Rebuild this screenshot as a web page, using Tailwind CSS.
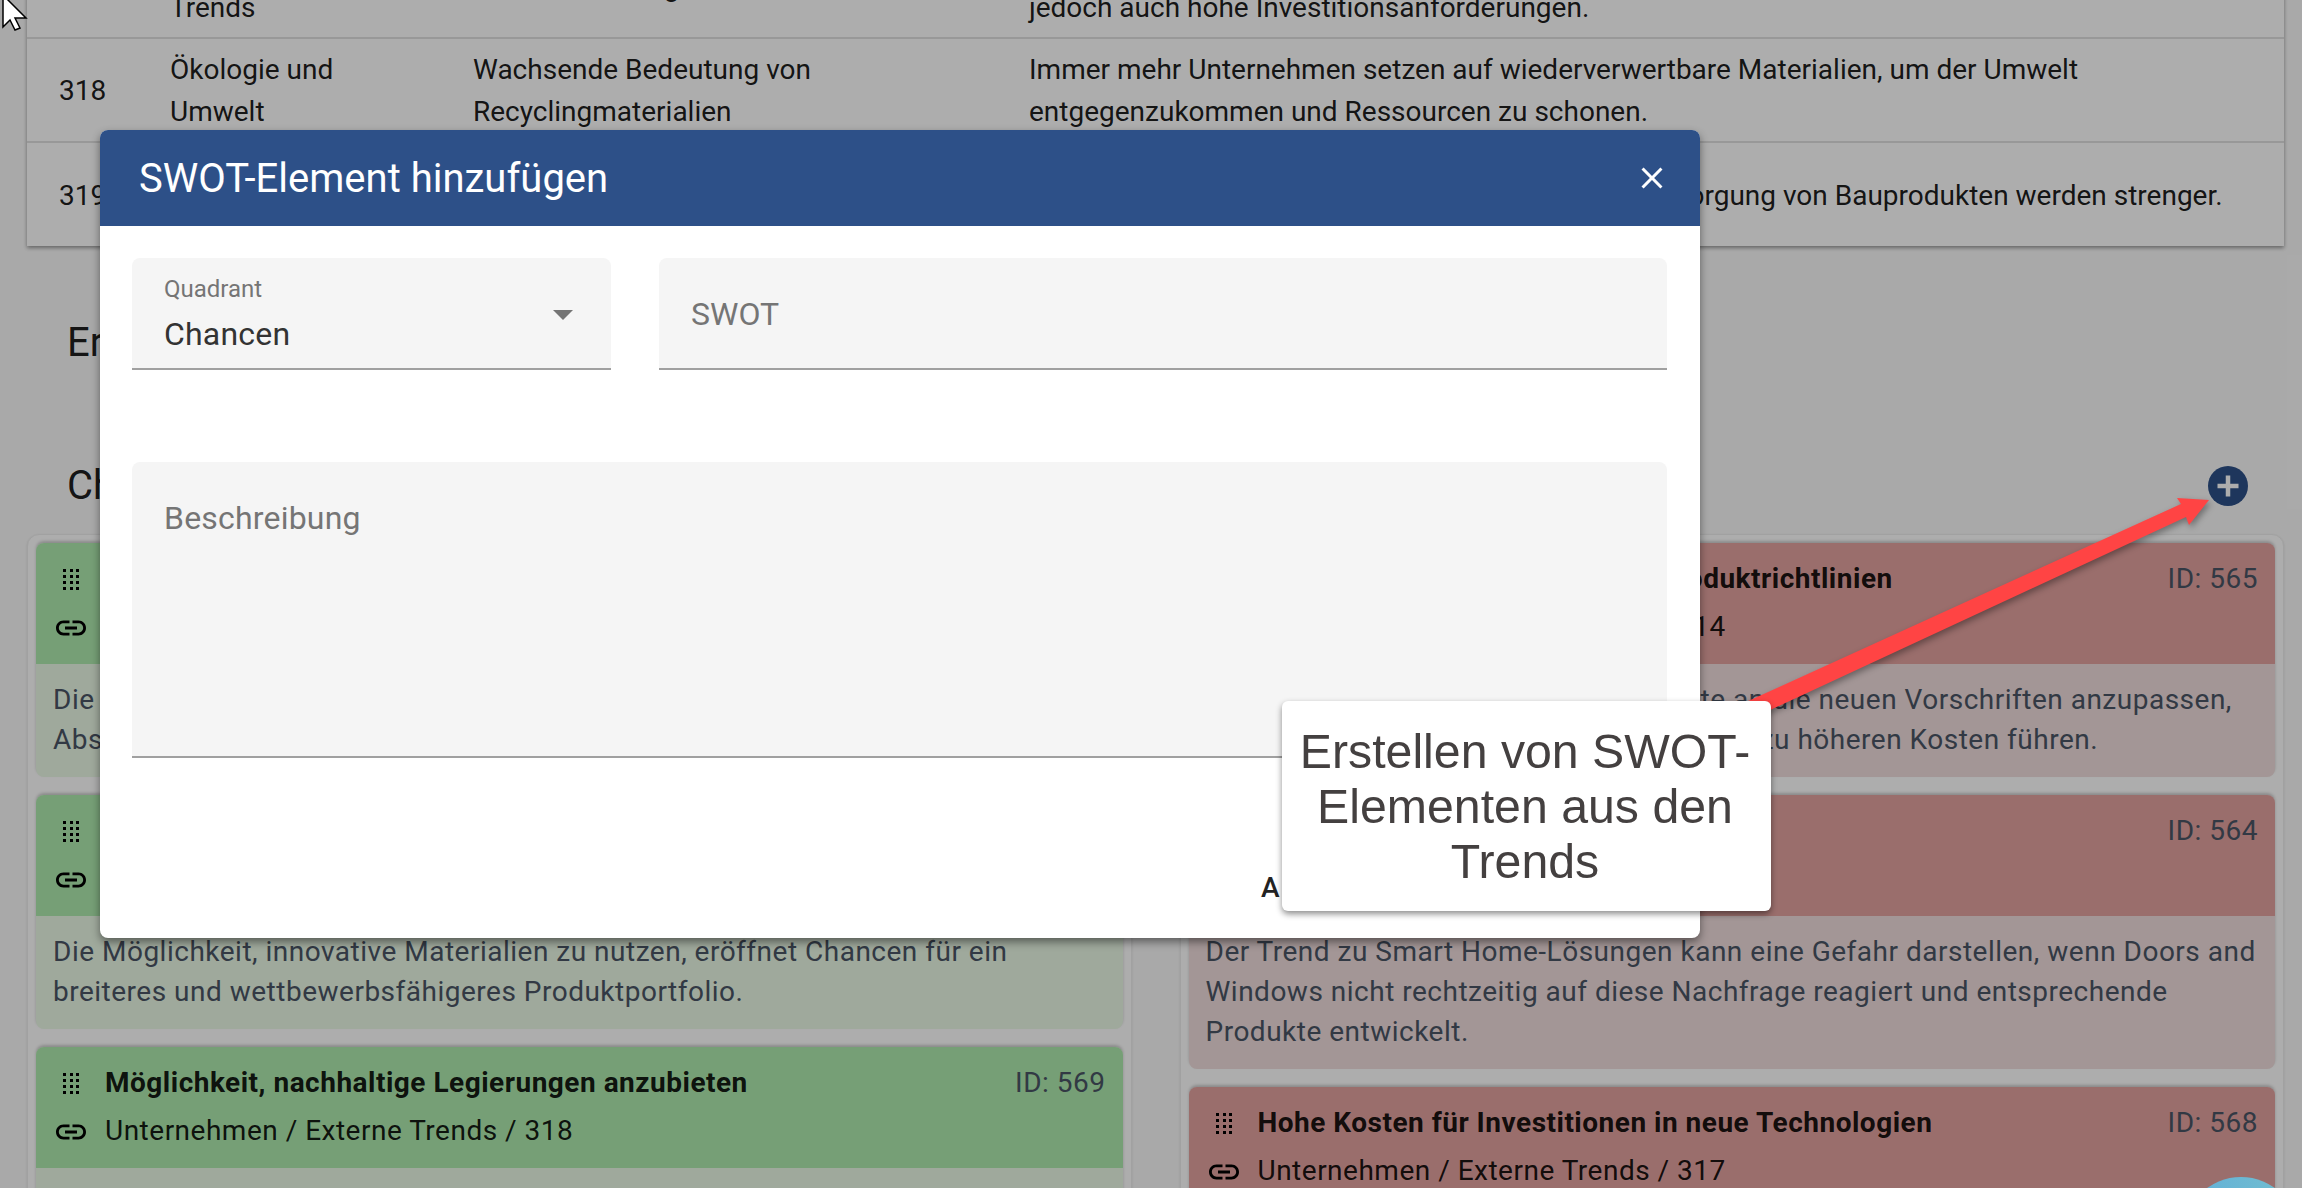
<!DOCTYPE html>
<html lang="de">

<head>
    <meta charset="UTF-8">
    <title>SWOT</title>
    <script src="https://cdn.jsdelivr.net/npm/@tailwindcss/browser@4"></script>
</head>

<body class="font-['Roboto',sans-serif] bg-[#fafafa] text-[28px] leading-[40px] text-black/90">
    <div class="relative h-[1188px] overflow-hidden">
        <!-- Page behind the dialog -->
        <div class="-mt-[66px] px-[27px] pr-[18px]">
            <table class="w-full table-fixed bg-white shadow-[0_2px_4px_rgba(0,0,0,.4)] leading-[42px] [&_td]:pt-[2px]">
                <tbody>
                    <tr class="h-[104px] border-b-2 border-[#e0e0e0]">
                        <td class="w-[111px] pl-8">317</td>
                        <td class="w-[303px] pl-8">Technologische<br>Trends</td>
                        <td class="w-[556px] pl-8">Automatisierung</td>
                        <td class="pl-8">Neue Maschinen erhöhen die Effizienz der Produktion, bringen<br>jedoch auch hohe Investitionsanforderungen.</td>
                    </tr>
                    <tr class="h-[104px] border-b-2 border-[#e0e0e0]">
                        <td class="pl-8">318</td>
                        <td class="pl-8">Ökologie und<br>Umwelt</td>
                        <td class="pl-8">Wachsende Bedeutung von<br>Recyclingmaterialien</td>
                        <td class="pl-8">Immer mehr Unternehmen setzen auf wiederverwertbare Materialien, um der Umwelt<br>entgegenzukommen und Ressourcen zu schonen.</td>
                    </tr>
                    <tr class="h-[104px]">
                        <td class="pl-8">319</td>
                        <td class="pl-8">Regulierung</td>
                        <td class="pl-8">Entsorgungsvorschriften</td>
                        <td class="pl-9 whitespace-nowrap">Alle gesetzlichen Vorschriften zur Lagerung und Entsorgung von Bauprodukten werden strenger.</td>
                    </tr>
                </tbody>
            </table>

            <h2 class="mt-[74px] pl-10 text-[40px] leading-[46px]">Erstellte SWOT-Elemente</h2>

            <div class="mt-[97px] flex h-[46px] items-center justify-between pl-10">
                <h2 class="text-[40px] leading-[46px]">Chancen</h2>
                <button class="mr-[36px] flex h-10 w-10 items-center justify-center rounded-full bg-[#2d5088]">
                    <svg class="h-10 w-10" viewBox="0 0 40 40" stroke="#fff" stroke-width="4.5"><path d="M20 9.5v21M9.5 20h21"/></svg>
                </button>
            </div>

            <div class="mt-[25px] grid grid-cols-2 gap-[48px] tracking-[.5px]">
                <!-- Chancen -->
                <div class="flex flex-col gap-[18px] rounded-xl border border-[#eeeeee] bg-white p-2 shadow-sm">
                    <div class="overflow-hidden rounded-lg bg-[#eaf9e6] shadow-[0_-2px_3px_rgba(0,0,0,.2)]">
                        <div class="bg-[#aeebae] pb-[17px] pl-5 pr-[17px] pt-4">
                            <div class="flex items-center">
                                <svg class="h-[21px] w-[30px] shrink-0" viewBox="0 0 30 21" fill="#000"><path d="M7 0h3v3H7zM14 0h3v3h-3zM20 0h3v3h-3zM7 6h3v3H7zM14 6h3v3h-3zM20 6h3v3h-3zM7 12h3v3H7zM14 12h3v3h-3zM20 12h3v3h-3zM7 18h3v3H7zM14 18h3v3h-3zM20 18h3v3h-3z"/></svg>
                                <span class="ml-[19px] font-bold">Innovative Technologien nutzen</span>
                                <span class="ml-auto text-gray-600">ID: 571</span>
                            </div>
                            <div class="mt-2 flex items-center">
                                <svg class="-ml-[3px] mt-[2px] h-9 w-[36px] shrink-0" viewBox="0 0 24 24" fill="#000"><path d="M3.9 12c0-1.71 1.39-3.1 3.1-3.1h4V7H7c-2.76 0-5 2.24-5 5s2.24 5 5 5h4v-1.9H7c-1.71 0-3.1-1.39-3.1-3.1zM8 13h8v-2H8v2zm9-6h-4v1.9h4c1.71 0 3.1 1.39 3.1 3.1s-1.39 3.1-3.1 3.1h-4V17h4c2.76 0 5-2.24 5-5s-2.24-5-5-5z"/></svg>
                                <span class="ml-4">Unternehmen / Externe Trends / 315</span>
                            </div>
                        </div>
                        <p class="px-[17px] pb-[17px] pt-4 text-gray-600">Die neuen Technologien erschließen zusätzliche Märkte und verbessern den<br>Absatz der bestehenden Produkte.</p>
                    </div>
                    <div class="overflow-hidden rounded-lg bg-[#eaf9e6] shadow-[0_-2px_3px_rgba(0,0,0,.2)]">
                        <div class="bg-[#aeebae] pb-[17px] pl-5 pr-[17px] pt-4">
                            <div class="flex items-center">
                                <svg class="h-[21px] w-[30px] shrink-0" viewBox="0 0 30 21" fill="#000"><path d="M7 0h3v3H7zM14 0h3v3h-3zM20 0h3v3h-3zM7 6h3v3H7zM14 6h3v3h-3zM20 6h3v3h-3zM7 12h3v3H7zM14 12h3v3h-3zM20 12h3v3h-3zM7 18h3v3H7zM14 18h3v3h-3zM20 18h3v3h-3z"/></svg>
                                <span class="ml-[19px] font-bold">Nutzung innovativer Materialien</span>
                                <span class="ml-auto text-gray-600">ID: 570</span>
                            </div>
                            <div class="mt-2 flex items-center">
                                <svg class="-ml-[3px] mt-[2px] h-9 w-[36px] shrink-0" viewBox="0 0 24 24" fill="#000"><path d="M3.9 12c0-1.71 1.39-3.1 3.1-3.1h4V7H7c-2.76 0-5 2.24-5 5s2.24 5 5 5h4v-1.9H7c-1.71 0-3.1-1.39-3.1-3.1zM8 13h8v-2H8v2zm9-6h-4v1.9h4c1.71 0 3.1 1.39 3.1 3.1s-1.39 3.1-3.1 3.1h-4V17h4c2.76 0 5-2.24 5-5s-2.24-5-5-5z"/></svg>
                                <span class="ml-4">Unternehmen / Externe Trends / 316</span>
                            </div>
                        </div>
                        <p class="px-[17px] pb-[17px] pt-4 text-gray-600">Die Möglichkeit, innovative Materialien zu nutzen, eröffnet Chancen für ein<br>breiteres und wettbewerbsfähigeres Produktportfolio.</p>
                    </div>
                    <div class="overflow-hidden rounded-lg bg-[#eaf9e6] shadow-[0_-2px_3px_rgba(0,0,0,.2)]">
                        <div class="bg-[#aeebae] pb-[17px] pl-5 pr-[17px] pt-4">
                            <div class="flex items-center">
                                <svg class="h-[21px] w-[30px] shrink-0" viewBox="0 0 30 21" fill="#000"><path d="M7 0h3v3H7zM14 0h3v3h-3zM20 0h3v3h-3zM7 6h3v3H7zM14 6h3v3h-3zM20 6h3v3h-3zM7 12h3v3H7zM14 12h3v3h-3zM20 12h3v3h-3zM7 18h3v3H7zM14 18h3v3h-3zM20 18h3v3h-3z"/></svg>
                                <span class="ml-[19px] font-bold">Möglichkeit, nachhaltige Legierungen anzubieten</span>
                                <span class="ml-auto text-gray-600">ID: 569</span>
                            </div>
                            <div class="mt-2 flex items-center">
                                <svg class="-ml-[3px] mt-[2px] h-9 w-[36px] shrink-0" viewBox="0 0 24 24" fill="#000"><path d="M3.9 12c0-1.71 1.39-3.1 3.1-3.1h4V7H7c-2.76 0-5 2.24-5 5s2.24 5 5 5h4v-1.9H7c-1.71 0-3.1-1.39-3.1-3.1zM8 13h8v-2H8v2zm9-6h-4v1.9h4c1.71 0 3.1 1.39 3.1 3.1s-1.39 3.1-3.1 3.1h-4V17h4c2.76 0 5-2.24 5-5s-2.24-5-5-5z"/></svg>
                                <span class="ml-4">Unternehmen / Externe Trends / 318</span>
                            </div>
                        </div>
                        <p class="px-[17px] pb-[17px] pt-4 text-gray-600">Nachhaltige Legierungen sprechen umweltbewusste Kunden an.</p>
                    </div>
                </div>

                <!-- Risiken -->
                <div class="flex flex-col gap-[18px] rounded-xl border border-[#eeeeee] bg-white p-2 shadow-sm">
                    <div class="overflow-hidden rounded-lg bg-[#f0dedd] shadow-[0_-2px_3px_rgba(0,0,0,.2)]">
                        <div class="bg-[#e4a29f] pb-[17px] pl-5 pr-[17px] pt-4">
                            <div class="flex items-center">
                                <svg class="h-[21px] w-[30px] shrink-0" viewBox="0 0 30 21" fill="#000"><path d="M7 0h3v3H7zM14 0h3v3h-3zM20 0h3v3h-3zM7 6h3v3H7zM14 6h3v3h-3zM20 6h3v3h-3zM7 12h3v3H7zM14 12h3v3h-3zM20 12h3v3h-3zM7 18h3v3H7zM14 18h3v3h-3zM20 18h3v3h-3z"/></svg>
                                <span class="ml-[19px] font-bold">Umsetzen der neuen Bau- und Produktrichtlinien</span>
                                <span class="ml-auto text-gray-600">ID: 565</span>
                            </div>
                            <div class="mt-2 flex items-center">
                                <svg class="-ml-[3px] mt-[2px] h-9 w-[36px] shrink-0" viewBox="0 0 24 24" fill="#000"><path d="M3.9 12c0-1.71 1.39-3.1 3.1-3.1h4V7H7c-2.76 0-5 2.24-5 5s2.24 5 5 5h4v-1.9H7c-1.71 0-3.1-1.39-3.1-3.1zM8 13h8v-2H8v2zm9-6h-4v1.9h4c1.71 0 3.1 1.39 3.1 3.1s-1.39 3.1-3.1 3.1h-4V17h4c2.76 0 5-2.24 5-5s-2.24-5-5-5z"/></svg>
                                <span class="ml-4">Unternehmen / Externe Trends / 314</span>
                            </div>
                        </div>
                        <p class="px-[17px] pb-[17px] pt-4 text-gray-600">Die Notwendigkeit, die eigenen Produkte an die neuen Vorschriften anzupassen,<br>kann für das gesamte Unternehmen sofort zu höheren Kosten führen.</p>
                    </div>
                    <div class="overflow-hidden rounded-lg bg-[#f0dedd] shadow-[0_-2px_3px_rgba(0,0,0,.2)]">
                        <div class="bg-[#e4a29f] pb-[17px] pl-5 pr-[17px] pt-4">
                            <div class="flex items-center">
                                <svg class="h-[21px] w-[30px] shrink-0" viewBox="0 0 30 21" fill="#000"><path d="M7 0h3v3H7zM14 0h3v3h-3zM20 0h3v3h-3zM7 6h3v3H7zM14 6h3v3h-3zM20 6h3v3h-3zM7 12h3v3H7zM14 12h3v3h-3zM20 12h3v3h-3zM7 18h3v3H7zM14 18h3v3h-3zM20 18h3v3h-3z"/></svg>
                                <span class="ml-[19px] font-bold">Smart Home-Trend</span>
                                <span class="ml-auto text-gray-600">ID: 564</span>
                            </div>
                            <div class="mt-2 flex items-center">
                                <svg class="-ml-[3px] mt-[2px] h-9 w-[36px] shrink-0" viewBox="0 0 24 24" fill="#000"><path d="M3.9 12c0-1.71 1.39-3.1 3.1-3.1h4V7H7c-2.76 0-5 2.24-5 5s2.24 5 5 5h4v-1.9H7c-1.71 0-3.1-1.39-3.1-3.1zM8 13h8v-2H8v2zm9-6h-4v1.9h4c1.71 0 3.1 1.39 3.1 3.1s-1.39 3.1-3.1 3.1h-4V17h4c2.76 0 5-2.24 5-5s-2.24-5-5-5z"/></svg>
                                <span class="ml-4">Unternehmen / Externe Trends / 313</span>
                            </div>
                        </div>
                        <p class="px-[17px] pb-[17px] pt-4 text-gray-600">Der Trend zu Smart Home-Lösungen kann eine Gefahr darstellen, wenn Doors and<br>Windows nicht rechtzeitig auf diese Nachfrage reagiert und entsprechende<br>Produkte entwickelt.</p>
                    </div>
                    <div class="overflow-hidden rounded-lg bg-[#f0dedd] shadow-[0_-2px_3px_rgba(0,0,0,.2)]">
                        <div class="bg-[#e4a29f] pb-[17px] pl-5 pr-[17px] pt-4">
                            <div class="flex items-center">
                                <svg class="h-[21px] w-[30px] shrink-0" viewBox="0 0 30 21" fill="#000"><path d="M7 0h3v3H7zM14 0h3v3h-3zM20 0h3v3h-3zM7 6h3v3H7zM14 6h3v3h-3zM20 6h3v3h-3zM7 12h3v3H7zM14 12h3v3h-3zM20 12h3v3h-3zM7 18h3v3H7zM14 18h3v3h-3zM20 18h3v3h-3z"/></svg>
                                <span class="ml-[19px] font-bold">Hohe Kosten für Investitionen in neue Technologien</span>
                                <span class="ml-auto text-gray-600">ID: 568</span>
                            </div>
                            <div class="mt-2 flex items-center">
                                <svg class="-ml-[3px] mt-[2px] h-9 w-[36px] shrink-0" viewBox="0 0 24 24" fill="#000"><path d="M3.9 12c0-1.71 1.39-3.1 3.1-3.1h4V7H7c-2.76 0-5 2.24-5 5s2.24 5 5 5h4v-1.9H7c-1.71 0-3.1-1.39-3.1-3.1zM8 13h8v-2H8v2zm9-6h-4v1.9h4c1.71 0 3.1 1.39 3.1 3.1s-1.39 3.1-3.1 3.1h-4V17h4c2.76 0 5-2.24 5-5s-2.24-5-5-5z"/></svg>
                                <span class="ml-4">Unternehmen / Externe Trends / 317</span>
                            </div>
                        </div>
                        <p class="px-[17px] pb-[17px] pt-4 text-gray-600">Neue Technologien verlangen hohe Anfangsinvestitionen.</p>
                    </div>
                </div>
            </div>
        </div>

        <!-- Dimmed backdrop -->
        <div class="absolute inset-0 bg-black/32"></div>

        <!-- Dialog -->
        <div class="absolute left-[100px] top-[130px] flex h-[808px] w-[1600px] flex-col overflow-hidden rounded-lg bg-white shadow-[0_4px_8px_rgba(0,0,0,.45)]">
            <div class="flex h-[96px] shrink-0 items-center justify-between bg-[#2d5088] pl-[39px] pr-[30px] text-white">
                <h1 class="pt-[2px] text-[40px] font-normal leading-[48px]">SWOT-Element hinzufügen</h1>
                <svg class="h-9 w-9" viewBox="0 0 24 24" fill="#fff"><path d="M19 6.41 17.59 5 12 10.59 6.41 5 5 6.41 10.59 12 5 17.59 6.41 19 12 13.41 17.59 19 19 17.59 13.41 12z"/></svg>
            </div>
            <div class="flex flex-1 flex-col px-[32px] pr-[33px] pt-[32px]">
                <div class="flex gap-[48px]">
                    <div class="relative h-[112px] w-[479px] rounded-t-lg border-b-2 border-[#a0a0a0] bg-[#f5f5f5] pl-[32px] pt-[16px]">
                        <div class="text-[24px] leading-[30px] text-[#757575]">Quadrant</div>
                        <div class="mt-[8px] text-[32px] leading-[44px] tracking-[.2px] text-[#333333]">Chancen</div>
                        <div class="absolute right-[38px] top-[52px] h-0 w-0 border-x-[10px] border-t-[10px] border-x-transparent border-t-[#757575]"></div>
                    </div>
                    <div class="flex h-[112px] flex-1 items-center rounded-t-lg border-b-2 border-[#a0a0a0] bg-[#f5f5f5] pl-[32px] pt-[2px] text-[32px] text-[#757575]">SWOT</div>
                </div>
                <div class="mt-[92px] h-[296px] rounded-t-lg border-b-2 border-[#a0a0a0] bg-[#f5f5f5] pl-[32px] pt-[34px] text-[32px] leading-[44px] tracking-[.2px] text-[#757575]">Beschreibung</div>
                <div class="flex flex-1 items-center pl-[1129px] pt-[80px] font-medium tracking-[2.5px] text-[#222222]">
                    <button>Abbrechen</button>
                    <button class="ml-6 text-[#2d5088]">Hinzufügen</button>
                </div>
            </div>
        </div>

        <!-- Annotation arrow -->
        <svg class="absolute left-0 top-0 drop-shadow-[2px_3px_3px_rgba(0,0,0,.35)]" width="2302" height="1188" viewBox="0 0 2302 1188">
            <polygon fill="#ff4444" points="1753,718 1746,702 2181,504 2177,498 2209,500 2189,525 2186,517"/>
        </svg>

        <!-- Annotation callout -->
        <div class="absolute left-[1282px] top-[701px] flex h-[210px] w-[489px] items-center justify-center rounded-md bg-white pr-[3px] text-center font-['Liberation_Sans',sans-serif] text-[48.25px] leading-[55px] text-[#444040] shadow-[0_3px_6px_rgba(0,0,0,.45)]">
            <p>Erstellen von SWOT-<br>Elementen aus den<br>Trends</p>
        </div>

        <!-- Help button, cut off by the window -->
        <div class="absolute left-[2183px] top-[1177px] h-[116px] w-[116px] rounded-full bg-linear-to-r from-[#62afd8] to-[#73bfce]"></div>

        <!-- Mouse cursor -->
        <svg class="absolute left-0 top-0" width="30" height="34" viewBox="0 0 30 34">
            <polygon fill="#fff" stroke="#000" stroke-width="1.5" points="3,-5 3,27 10,20 15,30 20,28 15,18 26,18"/>
        </svg>
    </div>
</body>

</html>
